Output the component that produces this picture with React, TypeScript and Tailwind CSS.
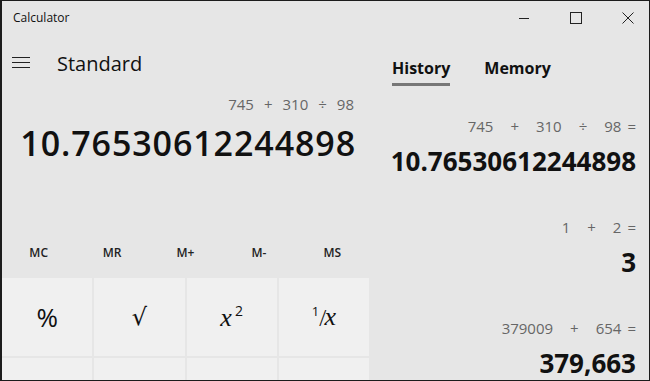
import React from 'react'

const font = { fontFamily: '"Open Sans", "Noto Sans", sans-serif' }
const serif = { fontFamily: '"Liberation Serif", serif' }

interface HistoryItem {
    tokens: string[]
    result: string
}

const history: HistoryItem[] = [
    { tokens: ['745', '+', '310', '÷', '98'], result: '10.76530612244898' },
    { tokens: ['1', '+', '2'], result: '3' },
    { tokens: ['379009', '+', '654'], result: '379,663' },
]

const memoryKeys = ['MC', 'MR', 'M+', 'M-', 'MS']

const TitleBar = () => (
    <div className="h-[32px] flex items-center justify-between shrink-0">
        <div className="pl-[11px] pt-[2px] text-[12px] text-[#111]">Calculator</div>
        <div className="flex items-center gap-[40px] pr-[15px] h-full pt-[2px]">
            <svg width="12" height="12" viewBox="0 0 12 12">
                <line x1="1" y1="6.5" x2="11" y2="6.5" stroke="#222" strokeWidth="1" />
            </svg>
            <svg width="12" height="12" viewBox="0 0 12 12">
                <rect x="0.5" y="0.5" width="11" height="11" fill="none" stroke="#222" strokeWidth="1" />
            </svg>
            <svg width="12" height="12" viewBox="0 0 12 12">
                <path d="M0.5 0.5 L11.5 11.5 M11.5 0.5 L0.5 11.5" stroke="#222" strokeWidth="1" />
            </svg>
        </div>
    </div>
)

export default function App() {
    return (
        <div
            style={font}
            className="w-[650px] h-[381px] bg-[#e6e6e6] border border-l-2 border-[#1c1c1c] overflow-hidden flex flex-col text-black"
        >
            <TitleBar />
            <div className="flex flex-1 min-w-0">
                {/* Left: standard calculator */}
                <div className="w-[367px] shrink-0 flex flex-col">
                    <div className="h-[61px] flex items-center">
                        <div className="ml-[10px] w-[18px] flex flex-col gap-[4px] -mt-[2px]">
                            <div className="h-[1px] bg-[#222]"></div>
                            <div className="h-[1px] bg-[#222]"></div>
                            <div className="h-[1px] bg-[#222]"></div>
                        </div>
                        <div className="ml-[27px] text-[20px] leading-none text-[#111]">
                            Standard
                        </div>
                    </div>
                    <div className="h-[20px] flex justify-end pr-[15px] text-[15px] leading-[20px] text-[#666] gap-[10px]">
                        <span>745</span>
                        <span>+</span>
                        <span>310</span>
                        <span>÷</span>
                        <span>98</span>
                    </div>
                    <div className="mt-[7px] h-[44px] flex justify-end pr-[13px] text-[34px] leading-[44px] font-semibold tracking-[0.9px] text-[#111]">
                        10.76530612244898
                    </div>
                    <div className="mt-[66px] h-[44px] grid grid-cols-5 text-[12px] font-semibold text-[#222]">
                        {memoryKeys.map((k) => (
                            <div key={k} className="flex items-center justify-center">
                                {k}
                            </div>
                        ))}
                    </div>
                    <div className="mt-[3px] grid grid-cols-4 gap-[2px]">
                        <div className="h-[78px] bg-[#f0f0f0] flex items-center justify-center text-[26px] text-[#111]">
                            %
                        </div>
                        <div
                            className="h-[78px] bg-[#f0f0f0] flex items-center justify-center text-[24px] text-[#111]"
                            style={{ fontFamily: '"DejaVu Sans", sans-serif' }}
                        >
                            √
                        </div>
                        <div className="h-[78px] bg-[#f0f0f0] flex items-center justify-center text-[#111]">
                            <span className="italic text-[26px]" style={serif}>
                                x
                            </span>
                            <span className="text-[14px] -mt-[14px] ml-[3px]">2</span>
                        </div>
                        <div className="h-[78px] bg-[#f0f0f0] flex items-center justify-center text-[#111]">
                            <span className="text-[13px] leading-none -translate-y-[6px]">1</span>
                            <span className="text-[22px] leading-none font-light">/</span>
                            <span className="italic text-[26px] leading-none -ml-[2px]" style={serif}>
                                x
                            </span>
                        </div>
                        <div className="h-[78px] bg-[#f0f0f0]"></div>
                        <div className="h-[78px] bg-[#f0f0f0]"></div>
                        <div className="h-[78px] bg-[#f0f0f0]"></div>
                        <div className="h-[78px] bg-[#f0f0f0]"></div>
                    </div>
                </div>

                {/* Right: history / memory */}
                <div className="flex-1 min-w-0 flex flex-col pl-[23px] pr-[13px]">
                    <div className="pt-[23px] flex gap-[34px] text-[16px] font-bold leading-[24px] text-[#111]">
                        <div className="flex flex-col">
                            <span>History</span>
                            <div className="mt-[3px] h-[3px] bg-[#777]"></div>
                        </div>
                        <div>Memory</div>
                    </div>
                    <div className="mt-[30px] flex flex-col gap-[38px]">
                        {history.map((item) => (
                            <div key={item.result} className="flex flex-col items-end">
                                <div className="h-[20px] flex text-[15px] leading-[20px] text-[#666]">
                                    {item.tokens.map((t, i) => (
                                        <span key={i} className={i === 0 ? '' : 'ml-[17px]'}>
                                            {t}
                                        </span>
                                    ))}
                                    <span className="ml-[6px]">=</span>
                                </div>
                                <div className="mt-[7px] h-[36px] text-[26px] leading-[36px] font-bold text-[#111] whitespace-nowrap">
                                    {item.result}
                                </div>
                            </div>
                        ))}
                    </div>
                </div>
            </div>
        </div>
    )
}
